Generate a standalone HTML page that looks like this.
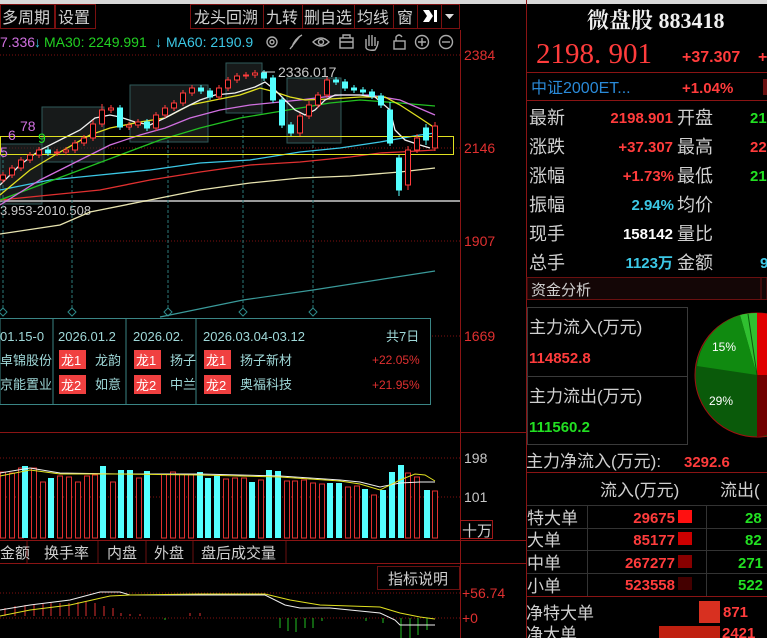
<!DOCTYPE html><html><head><meta charset="utf-8"><style>
body{margin:0;width:767px;height:638px;background:#000;overflow:hidden;font-family:"Liberation Sans","Noto Sans CJK SC",sans-serif}
svg{position:absolute;left:0;top:0}
.t{font-family:"Liberation Sans","Noto Sans CJK SC",sans-serif}
</style></head><body>
<svg width="767" height="638" viewBox="0 0 767 638" xmlns="http://www.w3.org/2000/svg" class="t">
<rect x="0" y="0" width="767" height="4" fill="#d8d8d8"/>
<g fill="none" stroke="#7a1010" stroke-width="1">
<rect x="0.5" y="4.5" width="54" height="24"/><rect x="55.5" y="4.5" width="40" height="24"/>
<rect x="190.5" y="4.5" width="73" height="24"/><rect x="263.5" y="4.5" width="39" height="24"/>
<rect x="302.5" y="4.5" width="52" height="24"/><rect x="354.5" y="4.5" width="39" height="24"/>
<rect x="393.5" y="4.5" width="24" height="24"/><rect x="417.5" y="4.5" width="24" height="24"/><rect x="441.5" y="4.5" width="18" height="24"/>
</g>
<g fill="#d0d0d0" font-size="16">
<text x="2" y="23">多周期</text><text x="58" y="23">设置</text>
<text x="194" y="23">龙头回溯</text><text x="266" y="23">九转</text><text x="304" y="23">删自选</text><text x="357" y="23">均线</text><text x="397" y="23">窗</text>
</g>
<path d="M423 10h6l4 6-4 6h-6l4-6z" fill="#fff"/><rect x="434" y="10" width="3" height="12" fill="#fff"/>
<path d="M445 14h9l-4.5 5z" fill="#ddd"/>
<g font-size="14">
<text x="0" y="47" fill="#d070e0">7.336</text><text x="34" y="47" fill="#3cc8e6">↓</text>
<text x="44" y="47" fill="#22d022">MA30: 2249.991</text><text x="155" y="47" fill="#3cc8e6">↓</text>
<text x="166" y="47" fill="#3cc8e6">MA60: 2190.9</text>
</g>
<g fill="none" stroke="#aaa" stroke-width="1.4">
<circle cx="272" cy="42" r="5"/><circle cx="272" cy="42" r="2"/>
<path d="M290 49l10-13M292 47c2-6 6-10 10-12"/>
<path d="M313 42q8-8 16 0q-8 8-16 0z"/><circle cx="321" cy="42" r="2.5"/>
<rect x="340" y="38" width="13" height="10"/><path d="M343 38v-3h7v3M340 42h13"/>
<path d="M366 48v-9M369 46v-11M372 46v-11M375 46v-9M366 48q2 3 9 2q3-4 3-9"/>
<rect x="394" y="41" width="11" height="8"/><path d="M396 41v-4q3-4 6 0"/>
<circle cx="422" cy="42" r="6.5"/><path d="M418 42h8M422 38v8"/>
<circle cx="446" cy="42" r="6.5"/><path d="M442 42h8"/>
</g>
<line x1="460.5" y1="30" x2="460.5" y2="638" stroke="#8a1414"/>
<line x1="526.5" y1="0" x2="526.5" y2="638" stroke="#8a1414"/>
<line x1="0" y1="432.5" x2="526" y2="432.5" stroke="#8a1414"/>
<line x1="0" y1="540.5" x2="526" y2="540.5" stroke="#8a1414"/>
<line x1="0" y1="563.5" x2="526" y2="563.5" stroke="#8a1414"/>
<g stroke="#801010" stroke-dasharray="1 2"><line x1="0" y1="55" x2="460" y2="55"/><line x1="0" y1="148" x2="460" y2="148"/><line x1="0" y1="241" x2="460" y2="241"/><line x1="0" y1="336" x2="460" y2="336"/><line x1="0" y1="458" x2="460" y2="458"/><line x1="0" y1="497" x2="460" y2="497"/><line x1="0" y1="593" x2="460" y2="593"/><line x1="0" y1="618" x2="460" y2="618"/></g>
<g fill="#e03030" font-size="14"><text x="464" y="60">2384</text><text x="464" y="153">2146</text><text x="464" y="246">1907</text><text x="464" y="341">1669</text><text x="462" y="598">+56.74</text><text x="462" y="623">+0</text></g>
<g fill="#c8c8c8" font-size="14"><text x="464" y="463">198</text><text x="464" y="502">101</text></g>
<rect x="460.5" y="520.5" width="32" height="18" fill="none" stroke="#a01818"/><text x="462" y="536" fill="#d0d0d0" font-size="15">十万</text>
<g fill="#2a2f2f" fill-opacity="0.55" stroke="#2f5a5a"><rect x="0" y="144" width="42" height="60"/><rect x="42" y="107" width="62" height="55"/><rect x="130" y="85" width="78" height="57"/><rect x="226" y="63" width="36" height="50"/><rect x="287" y="78" width="54" height="65"/></g>
<line x1="0" y1="201" x2="460" y2="201" stroke="#9a9a9a" stroke-width="2"/>
<text x="0" y="215" fill="#c8c8c8" font-size="13">3.953-2010.508</text>
<g stroke="#2d7a7a" stroke-dasharray="3 2"><line x1="3" y1="150" x2="3" y2="308"/><line x1="72" y1="160" x2="72" y2="308"/><line x1="168" y1="140" x2="168" y2="308"/><line x1="243" y1="115" x2="243" y2="308"/><line x1="313" y1="140" x2="313" y2="308"/></g>
<g fill="none" stroke="#2d8a8a"><path d="M3 308l4 4-4 4-4-4z"/><path d="M72 308l4 4-4 4-4-4z"/><path d="M168 308l4 4-4 4-4-4z"/><path d="M243 308l4 4-4 4-4-4z"/><path d="M313 308l4 4-4 4-4-4z"/></g>
<polyline points="160,317 243,300 313,290 435,271" fill="none" stroke="#3a9a9a" stroke-width="1.2"/>
<g fill="none" stroke-width="1.3">
<polyline stroke="#e8e4b0" points="0,234 60,225 90,212 150,200 200,190 250,183 300,178 350,176 400,172 435,168"/>
<polyline stroke="#e03030" points="0,200 50,195 100,190 150,180 200,172 250,165 300,162 350,157 380,153 400,152 435,150"/>
<polyline stroke="#3cc8e6" points="0,190 50,180 100,175 150,170 200,163 250,160 300,152 340,148 380,142 420,135 435,133"/>
<polyline stroke="#22c022" points="0,200 40,185 80,170 120,155 160,140 200,128 240,118 270,113 300,108 330,103 360,100 400,103 435,106"/>
<polyline stroke="#d070e0" points="0,205 40,180 80,160 110,145 140,135 165,128 190,118 220,110 250,105 270,103 300,100 340,95 370,95 400,100 435,115"/>
<polyline stroke="#e0e020" points="0,195 30,170 60,152 90,135 110,128 140,122 165,118 190,105 215,100 240,95 260,88 275,92 290,97 305,100 330,99 360,97 385,97 400,105 420,118 435,128"/>
<polyline stroke="#f0f0f0" points="0,185 20,165 40,150 60,140 80,130 95,118 110,115 120,117 135,122 150,125 165,118 180,110 200,100 215,95 235,93 255,87 265,82 275,90 285,100 295,110 305,115 315,110 325,100 335,95 345,95 360,95 375,97 390,110 395,130 405,140 420,145 430,148"/>
</g>
<rect x="0.5" y="136.5" width="453" height="18" fill="none" stroke="#e0e020"/>
<g stroke-width="1">
<g stroke="#ff3c3c" fill="#000">
<line x1="3" y1="172" x2="3" y2="183"/><rect x="0.5" y="175" width="5" height="5"/>
<line x1="12" y1="165" x2="12" y2="178"/><rect x="9.5" y="168" width="5" height="7"/>
<line x1="21" y1="157" x2="21" y2="171"/><rect x="18.5" y="160" width="5" height="8"/>
<line x1="30" y1="152" x2="30" y2="163"/><rect x="27.5" y="155" width="5" height="5"/>
<line x1="39" y1="147" x2="39" y2="158"/><rect x="36.5" y="150" width="5" height="5"/>
<line x1="57" y1="149" x2="57" y2="156"/><rect x="54.5" y="152" width="5" height="1"/>
<line x1="66" y1="147" x2="66" y2="155"/><rect x="63.5" y="150" width="5" height="2"/>
<line x1="75" y1="140" x2="75" y2="153"/><rect x="72.5" y="143" width="5" height="7"/>
<line x1="84" y1="135" x2="84" y2="146"/><rect x="81.5" y="138" width="5" height="5"/>
<line x1="93" y1="120" x2="93" y2="141"/><rect x="90.5" y="124" width="5" height="14"/>
<line x1="102" y1="104" x2="102" y2="127"/><rect x="99.5" y="110" width="5" height="14"/>
<line x1="111" y1="105" x2="111" y2="113"/><rect x="108.5" y="108" width="5" height="2"/>
<line x1="129" y1="122" x2="129" y2="130"/><rect x="126.5" y="125" width="5" height="2"/>
<line x1="138" y1="119" x2="138" y2="128"/><rect x="135.5" y="122" width="5" height="3"/>
<line x1="156" y1="112" x2="156" y2="131"/><rect x="153.5" y="115" width="5" height="13"/>
<line x1="165" y1="105" x2="165" y2="118"/><rect x="162.5" y="108" width="5" height="7"/>
<line x1="174" y1="100" x2="174" y2="111"/><rect x="171.5" y="103" width="5" height="5"/>
<line x1="183" y1="90" x2="183" y2="106"/><rect x="180.5" y="93" width="5" height="10"/>
<line x1="192" y1="85" x2="192" y2="96"/><rect x="189.5" y="88" width="5" height="5"/>
<line x1="219" y1="85" x2="219" y2="100"/><rect x="216.5" y="88" width="5" height="9"/>
<line x1="228" y1="77" x2="228" y2="91"/><rect x="225.5" y="80" width="5" height="8"/>
<line x1="237" y1="73" x2="237" y2="83"/><rect x="234.5" y="76" width="5" height="4"/>
<line x1="246" y1="72" x2="246" y2="79"/><rect x="243.5" y="75" width="5" height="1"/>
<line x1="255" y1="70" x2="255" y2="78"/><rect x="252.5" y="73" width="5" height="2"/>
<line x1="300" y1="113" x2="300" y2="136"/><rect x="297.5" y="116" width="5" height="17"/>
<line x1="309" y1="101" x2="309" y2="119"/><rect x="306.5" y="105" width="5" height="11"/>
<line x1="318" y1="92" x2="318" y2="108"/><rect x="315.5" y="95" width="5" height="10"/>
<line x1="327" y1="77" x2="327" y2="98"/><rect x="324.5" y="80" width="5" height="15"/>
<line x1="408" y1="146" x2="408" y2="190"/><rect x="405.5" y="150" width="5" height="35"/>
<line x1="417" y1="134" x2="417" y2="153"/><rect x="414.5" y="138" width="5" height="12"/>
<line x1="435" y1="122" x2="435" y2="151"/><rect x="432.5" y="126" width="5" height="22"/>
</g>
<g stroke="#54ffff" fill="#54ffff">
<line x1="48" y1="147" x2="48" y2="156"/><rect x="45.5" y="150" width="5" height="3"/>
<line x1="120" y1="105" x2="120" y2="130"/><rect x="117.5" y="108" width="5" height="19"/>
<line x1="147" y1="119" x2="147" y2="131"/><rect x="144.5" y="122" width="5" height="6"/>
<line x1="201" y1="85" x2="201" y2="94"/><rect x="198.5" y="88" width="5" height="3"/>
<line x1="210" y1="88" x2="210" y2="100"/><rect x="207.5" y="91" width="5" height="6"/>
<line x1="264" y1="70" x2="264" y2="81"/><rect x="261.5" y="73" width="5" height="5"/>
<line x1="273" y1="75" x2="273" y2="103"/><rect x="270.5" y="78" width="5" height="22"/>
<line x1="282" y1="97" x2="282" y2="128"/><rect x="279.5" y="100" width="5" height="25"/>
<line x1="291" y1="122" x2="291" y2="136"/><rect x="288.5" y="125" width="5" height="8"/>
<line x1="336" y1="77" x2="336" y2="85"/><rect x="333.5" y="80" width="5" height="2"/>
<line x1="345" y1="79" x2="345" y2="91"/><rect x="342.5" y="82" width="5" height="6"/>
<line x1="354" y1="85" x2="354" y2="93"/><rect x="351.5" y="88" width="5" height="2"/>
<line x1="363" y1="87" x2="363" y2="95"/><rect x="360.5" y="90" width="5" height="2"/>
<line x1="372" y1="89" x2="372" y2="99"/><rect x="369.5" y="92" width="5" height="4"/>
<line x1="381" y1="93" x2="381" y2="108"/><rect x="378.5" y="96" width="5" height="9"/>
<line x1="390" y1="102" x2="390" y2="146"/><rect x="387.5" y="110" width="5" height="33"/>
<line x1="399" y1="155" x2="399" y2="196"/><rect x="396.5" y="158" width="5" height="32"/>
<line x1="426" y1="124" x2="426" y2="145"/><rect x="423.5" y="128" width="5" height="12"/>
</g></g>
<line x1="262" y1="72" x2="275" y2="72" stroke="#ccc"/><text x="278" y="77" fill="#c8c8c8" font-size="14">2336.017</text>
<g font-size="14"><text x="0" y="157" fill="#d070e0">5</text><text x="8" y="140" fill="#d070e0">6</text><text x="20" y="131" fill="#d070e0">78</text><text x="38" y="143" fill="#22e022">9</text></g>
<rect x="0" y="318.5" width="430.5" height="86" fill="#000" stroke="#3a8585"/>
<g stroke="#3a8585"><line x1="53" y1="318" x2="53" y2="404"/><line x1="126" y1="318" x2="126" y2="404"/><line x1="196" y1="318" x2="196" y2="404"/></g>
<g font-size="13" fill="#9fd8d8"><text x="0" y="341">01.15-0</text><text x="58" y="341">2026.01.2</text><text x="133" y="341">2026.02.</text><text x="203" y="341">2026.03.04-03.12</text><text x="386" y="341">共7日</text>
<text x="0" y="365">卓锦股份</text><text x="0" y="389">京能置业</text><text x="95" y="365">龙韵</text><text x="95" y="389">如意</text><text x="170" y="365">扬子</text><text x="170" y="389">中兰</text><text x="240" y="365">扬子新材</text><text x="240" y="389">奥福科技</text></g>
<g fill="#f04040"><rect x="59" y="350" width="27" height="19"/><rect x="59" y="375" width="27" height="19"/><rect x="134" y="350" width="27" height="19"/><rect x="134" y="375" width="27" height="19"/><rect x="204" y="350" width="27" height="19"/><rect x="204" y="375" width="27" height="19"/></g>
<g fill="#fff" font-size="13"><text x="61" y="365">龙1</text><text x="61" y="390">龙2</text><text x="136" y="365">龙1</text><text x="136" y="390">龙2</text><text x="206" y="365">龙1</text><text x="206" y="390">龙2</text></g>
<g fill="#e03030" font-size="12"><text x="372" y="364">+22.05%</text><text x="372" y="389">+21.95%</text></g>
<g stroke="#e03030" fill="#000">
<rect x="0.5" y="472" width="5" height="66"/><rect x="9.5" y="473" width="5" height="65"/><rect x="18.5" y="468" width="5" height="70"/><rect x="31.5" y="468" width="5" height="70"/><rect x="40.5" y="482" width="5" height="56"/><rect x="57.5" y="476" width="5" height="62"/><rect x="66.5" y="477" width="5" height="61"/><rect x="75.5" y="482" width="5" height="56"/><rect x="84.5" y="476" width="5" height="62"/><rect x="92.5" y="475" width="5" height="63"/><rect x="110.5" y="482" width="5" height="56"/><rect x="136.5" y="478" width="5" height="60"/><rect x="161.5" y="474" width="5" height="64"/><rect x="170.5" y="472" width="5" height="66"/><rect x="179.5" y="474" width="5" height="64"/><rect x="188.5" y="474" width="5" height="64"/><rect x="223.5" y="479" width="5" height="59"/><rect x="232.5" y="478" width="5" height="60"/><rect x="241.5" y="478" width="5" height="60"/><rect x="258.5" y="480" width="5" height="58"/><rect x="284.5" y="481" width="5" height="57"/><rect x="292.5" y="481" width="5" height="57"/><rect x="301.5" y="480" width="5" height="58"/><rect x="310.5" y="483" width="5" height="55"/><rect x="319.5" y="484" width="5" height="54"/><rect x="345.5" y="487" width="5" height="51"/><rect x="354.5" y="486" width="5" height="52"/><rect x="371.5" y="495" width="5" height="43"/><rect x="405.5" y="473" width="5" height="65"/><rect x="414.5" y="477" width="5" height="61"/><rect x="432.5" y="491" width="5" height="47"/></g>
<g fill="#54ffff"><rect x="22" y="466" width="6" height="72"/><rect x="48" y="478" width="6" height="60"/><rect x="100" y="466" width="6" height="72"/><rect x="118" y="470" width="6" height="68"/><rect x="127" y="470" width="6" height="68"/><rect x="144" y="471" width="6" height="67"/><rect x="197" y="472" width="6" height="66"/><rect x="205" y="478" width="6" height="60"/><rect x="214" y="475" width="6" height="63"/><rect x="249" y="482" width="6" height="56"/><rect x="266" y="470" width="6" height="68"/><rect x="275" y="471" width="6" height="67"/><rect x="327" y="483" width="6" height="55"/><rect x="336" y="483" width="6" height="55"/><rect x="362" y="489" width="6" height="49"/><rect x="380" y="490" width="6" height="48"/><rect x="389" y="472" width="6" height="66"/><rect x="398" y="465" width="6" height="73"/><rect x="424" y="490" width="6" height="48"/></g>
<polyline fill="none" stroke="#f0f0f0" points="0,473 30,468 60,473 120,474 200,474 280,476 340,480 360,482 380,487 400,483 420,482 435,482"/>
<polyline fill="none" stroke="#e0e020" points="0,476 30,470 60,474 120,474 200,475 280,477 340,481 360,484 380,490 400,480 415,474 425,475 435,481"/>
<g fill="none" stroke="#6a1010"><line x1="27" y1="541" x2="27" y2="563"/><line x1="98" y1="541" x2="98" y2="563"/><line x1="146" y1="541" x2="146" y2="563"/><line x1="193" y1="541" x2="193" y2="563"/><line x1="286" y1="541" x2="286" y2="563"/></g>
<g fill="#d0d0d0" font-size="15"><text x="0" y="558">金额</text><text x="44" y="558">换手率</text><text x="107" y="558">内盘</text><text x="154" y="558">外盘</text><text x="201" y="558">盘后成交量</text></g>
<rect x="377.5" y="566.5" width="82" height="23" fill="none" stroke="#6a1010"/><text x="388" y="584" fill="#d0d0d0" font-size="15">指标说明</text>
<g stroke="#e03030"><line x1="5" y1="616" x2="5" y2="608"/><line x1="15" y1="616" x2="15" y2="606"/><line x1="25" y1="616" x2="25" y2="605"/><line x1="34" y1="616" x2="34" y2="604"/><line x1="43" y1="616" x2="43" y2="604"/><line x1="51" y1="616" x2="51" y2="603"/><line x1="60" y1="616" x2="60" y2="603"/><line x1="69" y1="616" x2="69" y2="603"/><line x1="78" y1="616" x2="78" y2="602"/><line x1="86" y1="616" x2="86" y2="601"/><line x1="95" y1="616" x2="95" y2="603"/><line x1="104" y1="616" x2="104" y2="606"/><line x1="113" y1="616" x2="113" y2="608"/><line x1="121" y1="616" x2="121" y2="613"/><line x1="130" y1="616" x2="130" y2="614"/><line x1="140" y1="616" x2="140" y2="614"/><line x1="190" y1="616" x2="190" y2="613"/><line x1="200" y1="616" x2="200" y2="613"/></g>
<g stroke="#22c022"><line x1="165" y1="618" x2="165" y2="620"/><line x1="280" y1="618" x2="280" y2="628"/><line x1="288" y1="618" x2="288" y2="631"/><line x1="296" y1="618" x2="296" y2="632"/><line x1="305" y1="618" x2="305" y2="628"/><line x1="313" y1="618" x2="313" y2="628"/><line x1="322" y1="618" x2="322" y2="621"/><line x1="366" y1="618" x2="366" y2="621"/><line x1="383" y1="618" x2="383" y2="623"/><line x1="401" y1="618" x2="401" y2="638"/><line x1="410" y1="618" x2="410" y2="638"/><line x1="418" y1="618" x2="418" y2="635"/><line x1="427" y1="618" x2="427" y2="630"/></g>
<polyline fill="none" stroke="#f0f0f0" points="0,610 30,605 70,600 100,592 120,592 130,595 200,595 265,595 285,605 300,608 330,608 380,613 395,620 400,625 435,625"/>
<polyline fill="none" stroke="#e0e020" points="0,616 30,610 70,605 110,596 130,595 200,594 265,594 290,600 320,605 380,607 400,613 420,617 435,619"/>
<text x="587" y="28" fill="#f0f0f0" font-size="22" font-weight="bold" font-family="Liberation Serif,Noto Serif CJK SC,serif">微盘股 883418</text>
<text x="536" y="63" fill="#ff3c3c" font-size="29" font-family="Liberation Serif,Noto Serif CJK SC,serif">2198. 901</text>
<text x="682" y="62" fill="#ff3c3c" font-size="16" font-weight="bold">+37.307</text><text x="758" y="62" fill="#ff3c3c" font-size="16" font-weight="bold">+</text>
<line x1="527" y1="72.5" x2="767" y2="72.5" stroke="#8a1414"/>
<text x="531" y="93" fill="#2a8ad8" font-size="16">中证2000ET...</text><text x="682" y="93" fill="#ff3c3c" font-size="15" font-weight="bold">+1.04%</text>
<rect x="763" y="79" width="4" height="16" fill="#6a1010"/>
<line x1="527" y1="100.5" x2="767" y2="100.5" stroke="#8a1414"/>
<g fill="#d0d0d0" font-size="18"><text x="529" y="124">最新</text><text x="529" y="153">涨跌</text><text x="529" y="182">涨幅</text><text x="529" y="211">振幅</text><text x="529" y="240">现手</text><text x="529" y="269">总手</text>
<text x="677" y="124">开盘</text><text x="677" y="153">最高</text><text x="677" y="182">最低</text><text x="677" y="211">均价</text><text x="677" y="240">量比</text><text x="677" y="269">金额</text></g>
<g font-size="15" font-weight="bold" text-anchor="end"><text x="673" y="123" fill="#ff3c3c">2198.901</text><text x="673" y="152" fill="#ff3c3c">+37.307</text><text x="674" y="181" fill="#ff3c3c">+1.73%</text><text x="674" y="210" fill="#3cc8e6">2.94%</text><text x="673" y="239" fill="#fff">158142</text><text x="673" y="268" fill="#3cc8e6">1123万</text></g>
<g font-size="15" font-weight="bold"><text x="750" y="123" fill="#22e022">21</text><text x="750" y="152" fill="#ff3c3c">22</text><text x="750" y="181" fill="#22e022">21</text><text x="760" y="268" fill="#3cc8e6">9</text></g>
<rect x="527" y="277.5" width="240" height="22" fill="#140606" stroke="#6a1010"/><line x1="761" y1="278" x2="761" y2="300" stroke="#6a1010"/>
<text x="531" y="295" fill="#d0d0d0" font-size="15">资金分析</text>
<g fill="none" stroke="#3a3a3a"><rect x="527.5" y="307.5" width="160" height="69"/><rect x="527.5" y="376.5" width="160" height="68"/></g>
<g fill="#d0d0d0" font-size="17"><text x="529" y="333">主力流入(万元)</text><text x="529" y="402">主力流出(万元)</text><text x="526" y="467">主力净流入(万元):</text><text x="600" y="496">流入(万元)</text><text x="720" y="496">流出(</text>
<text x="527" y="524">特大单</text><text x="527" y="546">大单</text><text x="527" y="569">中单</text><text x="527" y="592">小单</text><text x="526" y="619">净特大单</text><text x="526" y="640">净大单</text></g>
<g font-size="15" font-weight="bold"><text x="529" y="363" fill="#ff3c3c">114852.8</text><text x="529" y="432" fill="#22e022">111560.2</text><text x="684" y="467" fill="#ff3c3c">3292.6</text></g>
<line x1="527" y1="472.5" x2="767" y2="472.5" stroke="#8a1414"/>
<line x1="527" y1="596.5" x2="767" y2="596.5" stroke="#8a1414"/>
<g stroke="#333" fill="none"><line x1="527" y1="505.5" x2="767" y2="505.5"/><line x1="527" y1="528.5" x2="767" y2="528.5"/><line x1="527" y1="550.5" x2="767" y2="550.5"/><line x1="527" y1="573.5" x2="767" y2="573.5"/><line x1="587.5" y1="505" x2="587.5" y2="596"/><line x1="706.5" y1="505" x2="706.5" y2="596"/></g>
<g font-size="15" font-weight="bold" text-anchor="end" fill="#ff3c3c"><text x="675" y="523">29675</text><text x="675" y="545">85177</text><text x="675" y="568">267277</text><text x="675" y="590">523558</text></g>
<rect x="678" y="510" width="14" height="13" fill="#ff1010"/><rect x="678" y="532" width="14" height="13" fill="#c00"/><rect x="678" y="555" width="14" height="13" fill="#800"/><rect x="678" y="577" width="14" height="13" fill="#400"/>
<g font-size="15" font-weight="bold" fill="#22e022"><text x="745" y="523">28</text><text x="745" y="545">82</text><text x="738" y="568">271</text><text x="738" y="590">522</text></g>
<rect x="699" y="601" width="21" height="22" fill="#d83020"/><rect x="659" y="626" width="61" height="14" fill="#c02010"/>
<g font-size="15" font-weight="bold" fill="#ff3c3c"><text x="723" y="617">871</text><text x="722" y="638">2421</text></g>
<circle cx="757" cy="375" r="62" fill="#0a5a0a" stroke="#a01010"/>
<path d="M757 375L757 313A62 62 0 0 1 767 314L767 375z" fill="#e00000"/>
<path d="M757 375L757 313A62 62 0 0 0 740 315z" fill="#30c030"/>
<path d="M757 375L740 315A62 62 0 0 0 697 366z" fill="#108a10"/>
<path d="M757 375L767 375L767 435A62 62 0 0 1 757 437z" fill="#700000"/>
<line x1="757" y1="375" x2="748" y2="314" stroke="#0a5a0a"/>
<text x="712" y="351" fill="#fff" font-size="12">15%</text><text x="709" y="405" fill="#fff" font-size="12">29%</text>
</svg>
</body></html>
